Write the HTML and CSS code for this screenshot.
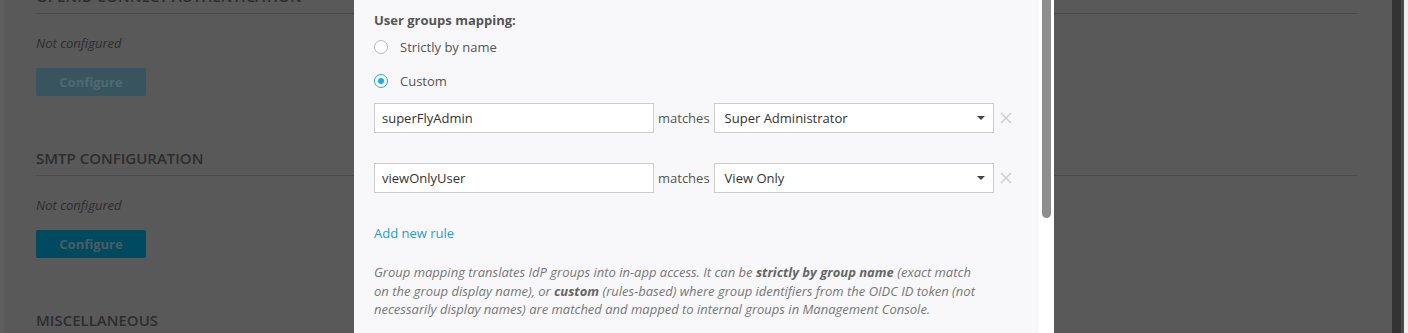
FILE: index.html
```html
<!DOCTYPE html>
<html lang="en">
<head>
    <meta charset="UTF-8">
    <meta name="viewport" content="width=device-width, initial-scale=1.0">
    <title>Settings</title>
    <link rel="stylesheet" href="styles.css">
</head>
<body>
    <div class="page">
        <main class="page-content">
            <section class="settings-section">
                <h2>OpenID Connect Authentication</h2>
                <p class="status">Not configured</p>
                <button class="btn btn-disabled">Configure</button>
            </section>
            <section class="settings-section">
                <h2>SMTP Configuration</h2>
                <p class="status">Not configured</p>
                <button class="btn">Configure</button>
            </section>
            <section class="settings-section">
                <h2>Miscellaneous</h2>
            </section>
        </main>
        <div class="page-scrollbar"></div>
    </div>

    <div class="backdrop">
        <div class="modal">
            <div class="modal-body">
                <p class="field-label">User groups mapping:</p>

                <label class="radio-row radio-first">
                    <span class="radio"></span>
                    Strictly by name
                </label>
                <label class="radio-row radio-second">
                    <span class="radio checked"></span>
                    Custom
                </label>

                <div class="rule-list">
                    <div class="rule-row">
                        <input class="text-input" type="text" value="superFlyAdmin">
                        <span class="matches">matches</span>
                        <div class="select-box">
                            <span>Super Administrator</span>
                            <span class="caret"></span>
                        </div>
                        <svg class="remove-icon" width="12" height="12" viewBox="0 0 12 12">
                            <path d="M1 1 L11 11 M11 1 L1 11" stroke="#cfcfcf" stroke-width="1.5" fill="none"/>
                        </svg>
                    </div>
                    <div class="rule-row">
                        <input class="text-input" type="text" value="viewOnlyUser">
                        <span class="matches">matches</span>
                        <div class="select-box">
                            <span>View Only</span>
                            <span class="caret"></span>
                        </div>
                        <svg class="remove-icon" width="12" height="12" viewBox="0 0 12 12">
                            <path d="M1 1 L11 11 M11 1 L1 11" stroke="#cfcfcf" stroke-width="1.5" fill="none"/>
                        </svg>
                    </div>
                </div>

                <a class="add-rule" href="#">Add new rule</a>

                <p class="help-text">
                    Group mapping translates IdP groups into in-app access. It can be <b>strictly by group name</b> (exact match
                    on the group display name), or <b>custom</b> (rules-based) where group identifiers from the OIDC ID token (not
                    necessarily display names) are matched and mapped to internal groups in Management Console.
                </p>
            </div>
            <div class="modal-scrollbar">
                <div class="modal-thumb"></div>
            </div>
        </div>
    </div>
</body>
</html>
```

FILE: styles.css
```css
/* --- reset --- */
* {
    box-sizing: border-box;
    margin: 0;
    padding: 0;
}

html, body {
    height: 100%;
    overflow: hidden;
}

body {
    font-family: 'Open Sans', 'Liberation Sans', sans-serif;
    font-size: 13px;
    background: #595959;
}

/* --- settings page behind the dialog (already dimmed) --- */
.page {
    display: flex;
    height: 100%;
    border-left: 4px solid #5e5e5e;
}

.page-content {
    flex: 1;
    padding: 0 35px 0 32px;
    margin-top: -14px; /* page is scrolled a bit */
}

.settings-section {
    margin-bottom: 52px;
}

.settings-section h2 {
    font-size: 15px;
    font-weight: 600;
    line-height: 20px;
    text-transform: uppercase;
    color: #2d2d2d;
    padding-bottom: 7px;
    border-bottom: 1px solid #4a4a4a;
}

.status {
    margin-top: 19px;
    font-style: italic;
    line-height: 20px;
    color: #2d2d2d;
}

.btn {
    margin-top: 15px;
    width: 110px;
    height: 28px;
    border: none;
    border-radius: 2px;
    background: #004a60;
    color: #4b5d63;
    font-family: inherit;
    font-size: 13px;
    font-weight: 700;
}

.btn-disabled {
    background: #38555f;
    color: #4f6a72;
}

.page-scrollbar {
    width: 16px;
    border-left: 9px solid #333333;
    border-right: 4px solid #efefef;
    background: #4a4a4a;
}

/* --- dialog --- */
.backdrop {
    position: fixed;
    inset: 0;
    display: flex;
    justify-content: center;
}

.modal {
    width: 700px;
    height: 100%;
    display: flex;
    background: #f8f8fa;
}

.modal-body {
    flex: 1;
    padding: 10px 20px 0;
    color: #555;
}

.field-label {
    font-weight: 700;
    line-height: 20px;
}

.radio-row {
    display: flex;
    align-items: center;
    gap: 12px;
    line-height: 20px;
    color: #555;
}

.radio-first {
    margin-top: 7px;
}

.radio-second {
    margin-top: 14px;
}

.radio {
    width: 14px;
    height: 14px;
    border: 1px solid #b8b8b8;
    border-radius: 50%;
    background: #fff;
    display: flex;
    align-items: center;
    justify-content: center;
}

.radio.checked {
    border-color: #1aade0;
}

.radio.checked::after {
    content: "";
    width: 6px;
    height: 6px;
    border-radius: 50%;
    background: #1aade0;
}

.rule-list {
    margin-top: 12px;
    display: flex;
    flex-direction: column;
    gap: 30px;
}

.rule-row {
    display: flex;
    align-items: center;
    height: 30px;
}

.text-input {
    width: 280px;
    height: 30px;
    border: 1px solid #cccccc;
    background: #fff;
    padding: 0 7px;
    font-family: inherit;
    font-size: 13px;
    color: #333;
    outline: none;
}

.matches {
    margin: 0 4px;
    color: #555;
}

.select-box {
    width: 280px;
    height: 30px;
    border: 1px solid #cccccc;
    background: #fff;
    padding: 0 8px 0 10px;
    display: flex;
    align-items: center;
    justify-content: space-between;
    color: #333;
}

.caret {
    width: 0;
    height: 0;
    border-left: 4px solid transparent;
    border-right: 4px solid transparent;
    border-top: 4px solid #444;
}

.remove-icon {
    margin-left: 6px;
}

.add-rule {
    display: block;
    margin-top: 30px;
    line-height: 20px;
    color: #1a9fd4;
    text-decoration: none;
}

.help-text {
    margin-top: 20px;
    width: 610px;
    font-size: 13px;
    font-style: italic;
    line-height: 18.5px;
    color: #777;
}

.help-text b {
    color: #666;
}

.modal-scrollbar {
    width: 15px;
    background: #fff;
    padding: 0 3px;
}

.modal-thumb {
    height: 218px;
    background: #8e8e8e;
    border-radius: 0 0 5px 5px;
}
```
